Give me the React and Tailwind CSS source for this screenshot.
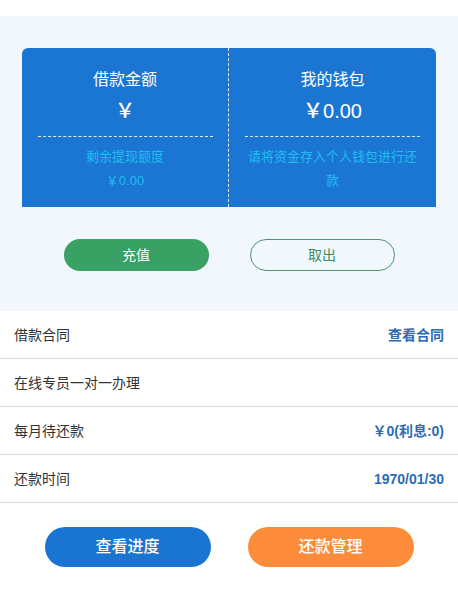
export default function App() {
  const rows = [
    { label: "借款合同", value: "查看合同" },
    { label: "在线专员一对一办理", value: "" },
    { label: "每月待还款", value: "￥0(利息:0)" },
    { label: "还款时间", value: "1970/01/30" },
  ];

  return (
    <div
      className="w-[458px] min-h-[594px] bg-white pt-4"
      style={{ fontFamily: '"Liberation Sans", "Noto Sans CJK SC", sans-serif' }}
    >
      {/* Wallet panel */}
      <div className="bg-[#f1f7fd] px-[22px] pt-8 pb-[40px]">
        <div className="flex h-[159px] rounded-t-md bg-[#1a76d2]">
          <div className="flex w-[207px] flex-col items-center border-r border-dashed border-white/90">
            <div className="pt-5 text-base leading-6 text-white">借款金额</div>
            <div className="mt-[5px] text-xl font-medium leading-7 text-white">￥</div>
            <div className="mt-[11px] w-[175px] border-t border-dashed border-white/90"></div>
            <div className="mt-2 text-[13px] leading-6 text-[#20bdf3]">剩余提现额度</div>
            <div className="text-[13px] leading-6 text-[#20bdf3]">￥0.00</div>
          </div>
          <div className="flex flex-1 flex-col items-center">
            <div className="pt-5 text-base leading-6 text-white">我的钱包</div>
            <div className="mt-[5px] text-xl font-medium leading-7 text-white">￥0.00</div>
            <div className="mt-[11px] w-[175px] border-t border-dashed border-white/90"></div>
            <div className="mt-2 w-[175px] text-center text-[13px] leading-6 text-[#20bdf3]">
              请将资金存入个人钱包进行还款
            </div>
          </div>
        </div>

        <div className="mt-8 flex justify-center gap-[41px]">
          <button className="h-8 w-[145px] rounded-full bg-[#38a163] text-sm text-white">
            充值
          </button>
          <button className="h-8 w-[145px] rounded-full border border-[#4a9670] bg-transparent text-sm text-[#3d8c5f]">
            取出
          </button>
        </div>
      </div>

      {/* Info rows */}
      <div>
        {rows.map((row) => (
          <div
            key={row.label}
            className="flex h-12 items-center justify-between border-b border-[#d6d6d6] px-[14px]"
          >
            <span className="text-sm text-[#333]">{row.label}</span>
            <span className="text-sm font-bold text-[#2b6db5]">{row.value}</span>
          </div>
        ))}
      </div>

      {/* Actions */}
      <div className="mt-6 flex justify-center gap-[37px] pb-7">
        <button className="h-10 w-[166px] rounded-full bg-[#1a75d2] text-base font-medium text-white">
          查看进度
        </button>
        <button className="h-10 w-[166px] rounded-full bg-[#fd8c3a] text-base font-medium text-white">
          还款管理
        </button>
      </div>
    </div>
  );
}
